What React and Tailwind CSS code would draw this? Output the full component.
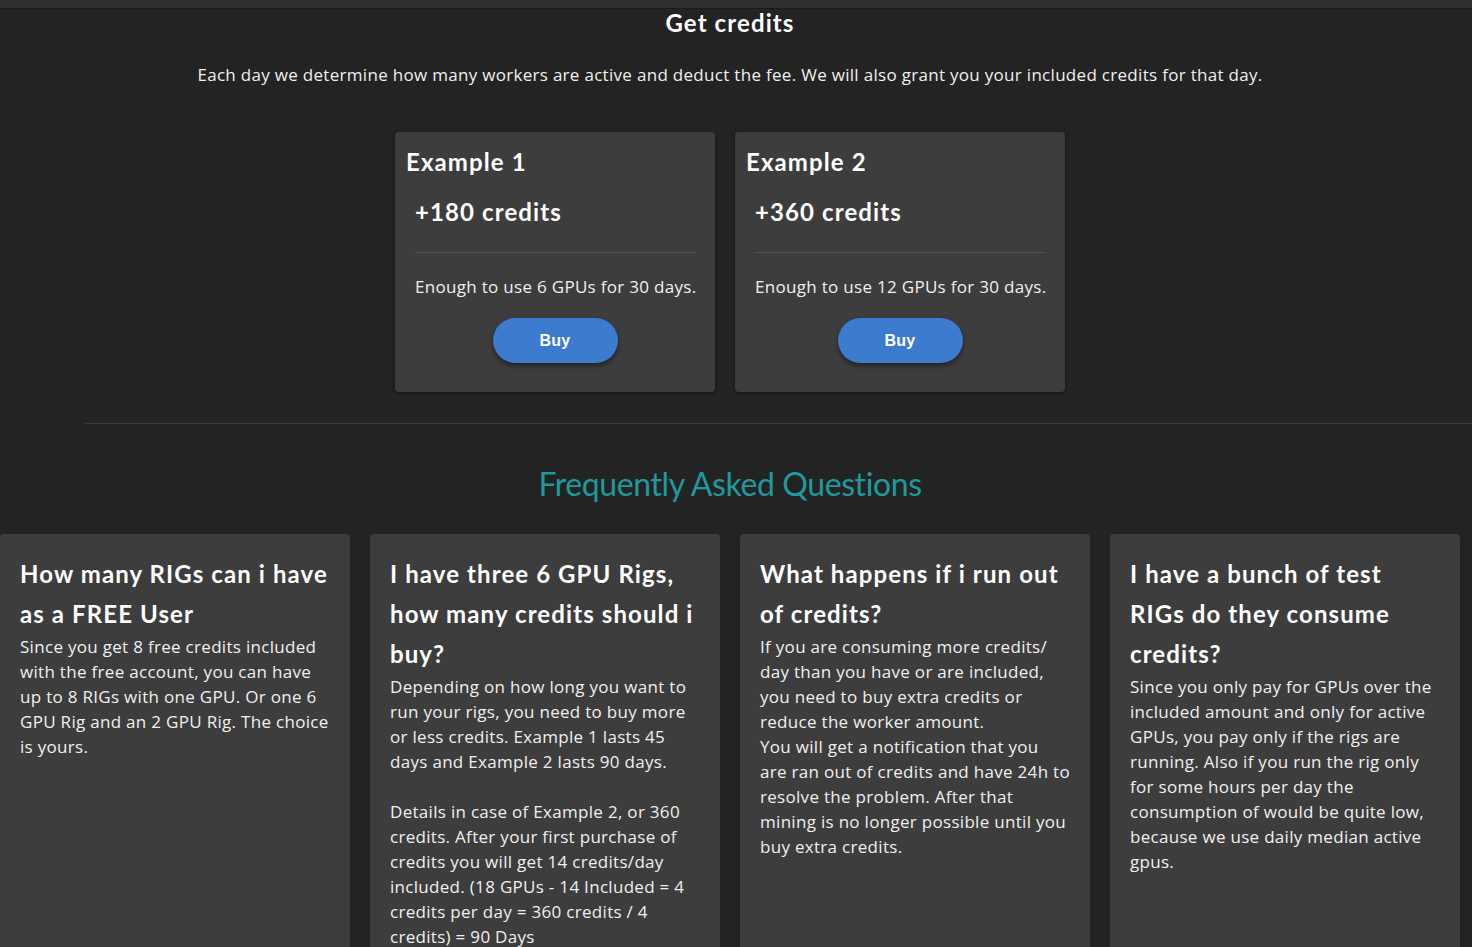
import React from 'react';

const examples = [
  { title: 'Example 1', credits: '+180 credits', text: 'Enough to use 6 GPUs for 30 days.', width: 'w-[320px]' },
  { title: 'Example 2', credits: '+360 credits', text: 'Enough to use 12 GPUs for 30 days.', width: 'w-[330px]' },
];

const faqs = [
  {
    q: 'How many RIGs can i have as a FREE User',
    a: ['Since you get 8 free credits included with the free account, you can have up to 8 RIGs with one GPU. Or one 6 GPU Rig and an 2 GPU Rig. The choice is yours.'],
  },
  {
    q: 'I have three 6 GPU Rigs, how many credits should i buy?',
    a: [
      'Depending on how long you want to run your rigs, you need to buy more or less credits. Example 1 lasts 45 days and Example 2 lasts 90 days.',
      '',
      'Details in case of Example 2, or 360 credits. After your first purchase of credits you will get 14 credits/day included. (18 GPUs - 14 Included = 4 credits per day = 360 credits / 4 credits) = 90 Days',
    ],
  },
  {
    q: 'What happens if i run out of credits?',
    a: [
      'If you are consuming more credits/ day than you have or are included, you need to buy extra credits or reduce the worker amount.',
      'You will get a notification that you are ran out of credits and have 24h to resolve the problem. After that mining is no longer possible until you buy extra credits.',
    ],
  },
  {
    q: 'I have a bunch of test RIGs do they consume credits?',
    a: ['Since you only pay for GPUs over the included amount and only for active GPUs, you pay only if the rigs are running. Also if you run the rig only for some hours per day the consumption of would be quite low, because we use daily median active gpus.'],
  },
];

const headFont = { fontFamily: 'Lato, "Open Sans", sans-serif' };

const ExampleCard = ({ item }) => (
  <div className={`${item.width} h-[260px] rounded-[4px] bg-[#3d3d3d] shadow-[0_1px_3px_rgba(0,0,0,0.5)] pt-[14px]`}>
    <h3 className="pl-[11px] text-[24px] leading-[32px] font-bold tracking-[1.1px] text-white" style={headFont}>{item.title}</h3>
    <div className="px-[20px]">
      <p className="mt-[18px] text-[24px] leading-[32px] font-bold tracking-[1.1px] text-white" style={headFont}>{item.credits}</p>
      <div className="mt-[24px] h-px bg-[#575757]" />
      <p className="mt-[22px] text-[17px] leading-[24px] text-[#f0f0f0] whitespace-nowrap">{item.text}</p>
      <div className="mt-[19px] flex justify-center">
        <button
          type="button"
          className="w-[125px] h-[45px] rounded-full bg-[#3d7bcf] text-white text-[16px] font-bold shadow-[0_3px_5px_rgba(0,0,0,0.45)]"
          style={{ fontFamily: '"Liberation Sans", Arial, sans-serif' }}
        >
          Buy
        </button>
      </div>
    </div>
  </div>
);

export default function App() {
  return (
    <div
      className="min-h-[947px] bg-[#232323] text-white overflow-hidden tracking-[0.3px]"
      style={{ fontFamily: '"Open Sans", "Noto Sans", sans-serif' }}
    >
      <div className="h-[9px] bg-[#2f2f2f] border-b border-[#1b1b1b]" />
      <div className="w-[1460px]">
        <h1 className="mt-[2px] text-center text-[24px] leading-[24px] font-bold tracking-[1.1px]" style={headFont}>Get credits</h1>
        <p className="mt-[28px] text-center text-[17px] leading-[24px] text-[#f0f0f0]">
          Each day we determine how many workers are active and deduct the fee. We will also grant you your included credits for that day.
        </p>
        <div className="mt-[45px] flex justify-center gap-[20px]">
          {examples.map((item) => <ExampleCard key={item.title} item={item} />)}
        </div>
      </div>
      <div className="mt-[31px] ml-[85px] h-px bg-[#3a3a3a]" />
      <div className="w-[1460px]">
        <h2 className="mt-[40px] text-center text-[32px] leading-[40px] font-normal tracking-[-0.4px] text-[#1f9a9c]" style={headFont}>
          Frequently Asked Questions
        </h2>
        <div className="mt-[30px] grid grid-cols-4 gap-[20px]">
          {faqs.map((f) => (
            <div key={f.q} className="h-[430px] rounded-[4px] bg-[#3d3d3d] px-[20px] pt-[20px]">
              <h3 className="text-[24px] leading-[40px] font-bold tracking-[1.1px] text-white" style={headFont}>{f.q}</h3>
              <div className="text-[17px] leading-[25px] text-[#f0f0f0]">
                {f.a.map((para, i) => (para === '' ? <div key={i} className="h-[25px]" /> : <p key={i}>{para}</p>))}
              </div>
            </div>
          ))}
        </div>
      </div>
    </div>
  );
}
